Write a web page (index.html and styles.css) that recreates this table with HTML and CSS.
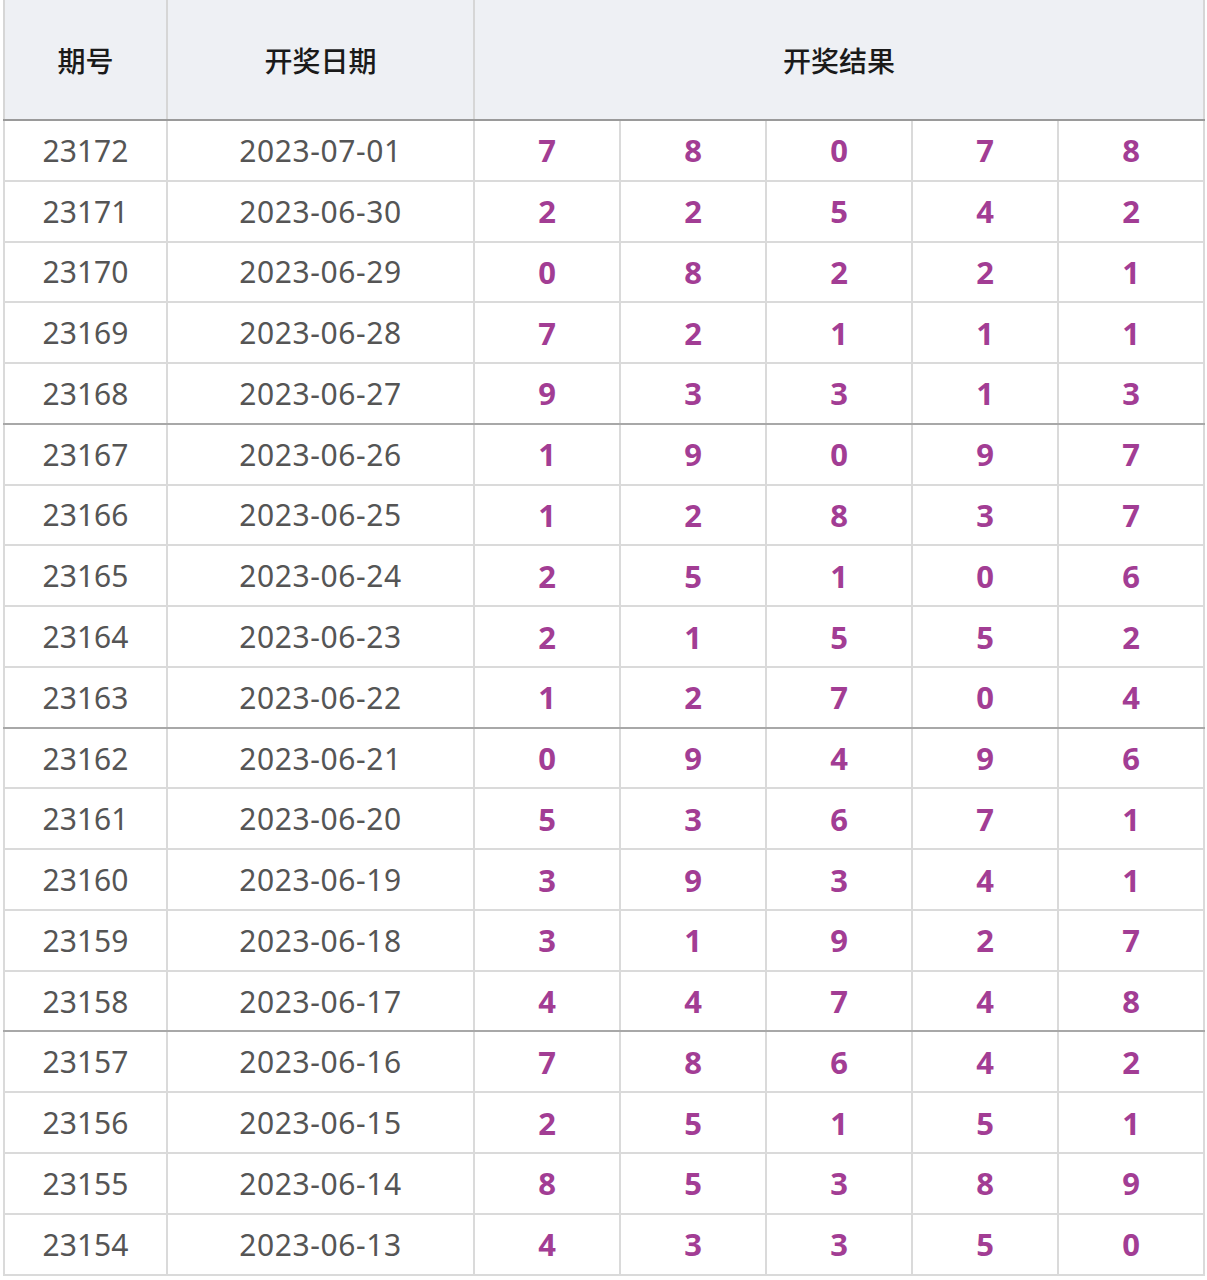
FILE: index.html
```html
<!DOCTYPE html>
<html lang="zh">
<head>
<meta charset="utf-8">
<link rel="stylesheet" href="styles.css">
</head>
<body>
<table class="draw">
<colgroup>
<col class="c-id"><col class="c-date"><col class="c-n"><col class="c-n"><col class="c-n"><col class="c-n"><col class="c-n">
</colgroup>
<thead>
<tr><th>期号</th><th>开奖日期</th><th colspan="5" class="sep">开奖结果</th></tr>
</thead>
<tbody>
<tr><td>23172</td><td class="d">2023-07-01</td><td class="n sep">7</td><td class="n">8</td><td class="n">0</td><td class="n">7</td><td class="n">8</td></tr>
<tr><td>23171</td><td class="d">2023-06-30</td><td class="n sep">2</td><td class="n">2</td><td class="n">5</td><td class="n">4</td><td class="n">2</td></tr>
<tr><td>23170</td><td class="d">2023-06-29</td><td class="n sep">0</td><td class="n">8</td><td class="n">2</td><td class="n">2</td><td class="n">1</td></tr>
<tr><td>23169</td><td class="d">2023-06-28</td><td class="n sep">7</td><td class="n">2</td><td class="n">1</td><td class="n">1</td><td class="n">1</td></tr>
<tr class="grp"><td>23168</td><td class="d">2023-06-27</td><td class="n sep">9</td><td class="n">3</td><td class="n">3</td><td class="n">1</td><td class="n">3</td></tr>
<tr><td>23167</td><td class="d">2023-06-26</td><td class="n sep">1</td><td class="n">9</td><td class="n">0</td><td class="n">9</td><td class="n">7</td></tr>
<tr><td>23166</td><td class="d">2023-06-25</td><td class="n sep">1</td><td class="n">2</td><td class="n">8</td><td class="n">3</td><td class="n">7</td></tr>
<tr><td>23165</td><td class="d">2023-06-24</td><td class="n sep">2</td><td class="n">5</td><td class="n">1</td><td class="n">0</td><td class="n">6</td></tr>
<tr><td>23164</td><td class="d">2023-06-23</td><td class="n sep">2</td><td class="n">1</td><td class="n">5</td><td class="n">5</td><td class="n">2</td></tr>
<tr class="grp"><td>23163</td><td class="d">2023-06-22</td><td class="n sep">1</td><td class="n">2</td><td class="n">7</td><td class="n">0</td><td class="n">4</td></tr>
<tr><td>23162</td><td class="d">2023-06-21</td><td class="n sep">0</td><td class="n">9</td><td class="n">4</td><td class="n">9</td><td class="n">6</td></tr>
<tr><td>23161</td><td class="d">2023-06-20</td><td class="n sep">5</td><td class="n">3</td><td class="n">6</td><td class="n">7</td><td class="n">1</td></tr>
<tr><td>23160</td><td class="d">2023-06-19</td><td class="n sep">3</td><td class="n">9</td><td class="n">3</td><td class="n">4</td><td class="n">1</td></tr>
<tr><td>23159</td><td class="d">2023-06-18</td><td class="n sep">3</td><td class="n">1</td><td class="n">9</td><td class="n">2</td><td class="n">7</td></tr>
<tr class="grp"><td>23158</td><td class="d">2023-06-17</td><td class="n sep">4</td><td class="n">4</td><td class="n">7</td><td class="n">4</td><td class="n">8</td></tr>
<tr><td>23157</td><td class="d">2023-06-16</td><td class="n sep">7</td><td class="n">8</td><td class="n">6</td><td class="n">4</td><td class="n">2</td></tr>
<tr><td>23156</td><td class="d">2023-06-15</td><td class="n sep">2</td><td class="n">5</td><td class="n">1</td><td class="n">5</td><td class="n">1</td></tr>
<tr><td>23155</td><td class="d">2023-06-14</td><td class="n sep">8</td><td class="n">5</td><td class="n">3</td><td class="n">8</td><td class="n">9</td></tr>
<tr><td>23154</td><td class="d">2023-06-13</td><td class="n sep">4</td><td class="n">3</td><td class="n">3</td><td class="n">5</td><td class="n">0</td></tr>
</tbody>
</table>
</body>
</html>
```

FILE: styles.css
```css
html, body {
  margin: 0;
  padding: 0;
  background: #ffffff;
}

body {
  padding-left: 3px;
  font-family: "Noto Sans", "Open Sans", "Noto Sans CJK SC", sans-serif;
}

.draw {
  border-collapse: collapse;
  table-layout: fixed;
  width: 1202px;
}

.c-id { width: 163px; }
.c-date { width: 307px; }
.c-n { width: 146px; }

.draw th {
  height: 119px;
  padding: 0;
  background: #eef0f4;
  color: #1a1a1a;
  font-family: "Noto Sans CJK SC", sans-serif;
  font-weight: 500;
  font-size: 28px;
  text-align: center;
  vertical-align: middle;
  border-left: 2px solid #d6d6d6;
  border-right: 2px solid #d6d6d6;
  border-bottom: 2px solid #9a9a9a;
}

.draw td {
  height: 58.78px;
  padding: 0;
  text-align: center;
  vertical-align: middle;
  color: #555555;
  font-size: 30px;
  border: 2px solid #dadada;
}

.draw td.d {
  letter-spacing: 0.6px;
}

.draw tr.grp td {
  border-bottom-color: #a8a8a8;
}

.draw .sep {
  border-left-color: #a0a0a0;
}

.draw td.n {
  color: #a23d94;
  font-weight: 700;
  font-size: 31px;
}
```
